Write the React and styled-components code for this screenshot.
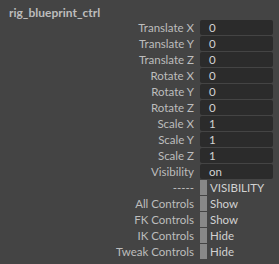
import React from "react";
import styled, { createGlobalStyle } from "styled-components";

const GlobalStyle = createGlobalStyle`
  html, body {
    margin: 0;
    padding: 0;
    background-color: #444444;
  }
  body {
    font-family: Lato, "Liberation Sans", sans-serif;
  }
`;

const Panel = styled.div`
  width: 279px;
  height: 264px;
  background-color: #444444;
  overflow: hidden;
`;

const Title = styled.div`
  height: 20px;
  padding-left: 9px;
  font-size: 12px;
  font-weight: bold;
  line-height: 26px;
  color: #bcbcbc;
  box-sizing: border-box;
`;

const Row = styled.div`
  display: grid;
  grid-template-columns: 194px 73px;
  column-gap: 6px;
  height: 15px;
  margin-bottom: 1px;
`;

const Label = styled.div`
  text-align: right;
  font-size: 11.5px;
  line-height: 15px;
  color: #bdbdbd;
  white-space: nowrap;
`;

const Field = styled.div`
  background-color: #2b2b2b;
  border-radius: 2px;
  padding-left: 9px;
  font-size: 11.5px;
  line-height: 15px;
  color: #d2d2d2;
`;

const EnumField = styled.div`
  display: flex;
  align-items: stretch;
  gap: 3px;
  font-size: 11.5px;
  line-height: 15px;
  color: #d2d2d2;
`;

const Bar = styled.div`
  width: 7px;
  background-color: #888888;
`;

const attrs = [
  ["Translate X", "0"],
  ["Translate Y", "0"],
  ["Translate Z", "0"],
  ["Rotate X", "0"],
  ["Rotate Y", "0"],
  ["Rotate Z", "0"],
  ["Scale X", "1"],
  ["Scale Y", "1"],
  ["Scale Z", "1"],
  ["Visibility", "on"],
];

const enums = [
  ["-----", "VISIBILITY"],
  ["All Controls", "Show"],
  ["FK Controls", "Show"],
  ["IK Controls", "Hide"],
  ["Tweak Controls", "Hide"],
];

export default function App() {
  return (
    <Panel>
      <GlobalStyle />
      <Title>rig_blueprint_ctrl</Title>
      {attrs.map(([name, value]) => (
        <Row key={name}>
          <Label>{name}</Label>
          <Field>{value}</Field>
        </Row>
      ))}
      {enums.map(([name, value]) => (
        <Row key={name}>
          <Label>{name}</Label>
          <EnumField>
            <Bar />
            <span>{value}</span>
          </EnumField>
        </Row>
      ))}
    </Panel>
  );
}
